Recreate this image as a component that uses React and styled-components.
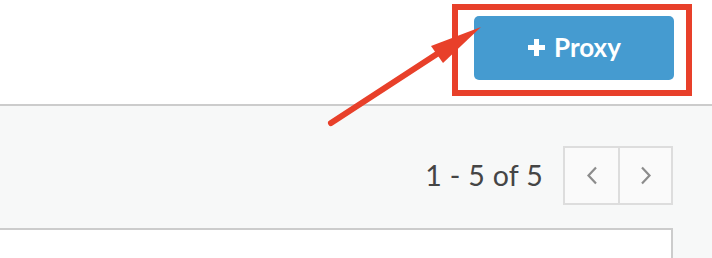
import React from 'react';
import styled, { createGlobalStyle } from 'styled-components';

const GlobalStyle = createGlobalStyle`
  html, body {
    margin: 0;
    padding: 0;
    background: #ffffff;
    font-family: Lato, "Open Sans", sans-serif;
    overflow: hidden;
  }
`;

const Page = styled.div`
  position: relative;
  width: 712px;
  height: 258px;
  overflow: hidden;
`;

const Header = styled.header`
  height: 106px;
  display: flex;
  justify-content: flex-end;
  align-items: flex-start;
  padding: 16px 38px 0 0;
  box-sizing: border-box;
  border-bottom: 2px solid #cccccc;
`;

const AddButton = styled.button`
  width: 200px;
  height: 64px;
  border: none;
  border-radius: 5px;
  background: #459bd0;
  color: #ffffff;
  font-family: Lato, sans-serif;
  font-weight: 700;
  font-size: 26px;
  display: flex;
  align-items: center;
  justify-content: center;
  gap: 8px;
  padding: 0 0 2px 0;
  cursor: pointer;
`;

const Toolbar = styled.div`
  background: #f7f8f8;
  height: 122px;
  display: flex;
  justify-content: flex-end;
  align-items: flex-start;
  padding: 40px 39px 0 0;
  box-sizing: border-box;
`;

const Pager = styled.div`
  display: flex;
  align-items: center;
  gap: 20px;
`;

const Count = styled.span`
  font-size: 28.5px;
  color: #454545;
  letter-spacing: 0.3px;
  margin-bottom: 2px;
`;

const PagerButtons = styled.div`
  display: flex;
  border: 2px solid #dddddd;
  background: #fafafa;
`;

const PagerButton = styled.button`
  width: 53px;
  height: 55px;
  border: none;
  background: transparent;
  padding: 0;
  display: flex;
  align-items: center;
  justify-content: center;
  border-left: ${p => (p.divider ? '2px solid #dddddd' : 'none')};
`;

const ContentArea = styled.div`
  background: #f7f8f8;
  height: 30px;
  padding-right: 39px;
`;

const Panel = styled.div`
  height: 100%;
  background: #ffffff;
  border-top: 2px solid #cccccc;
  border-right: 2px solid #cccccc;
`;

const Annotation = styled.svg`
  position: absolute;
  left: 0;
  top: 0;
  pointer-events: none;
`;

const Chevron = ({ dir }) => (
  <svg width="12" height="19" viewBox="0 0 12 19">
    <path
      d={dir === 'left' ? 'M10 1.5 L2.5 9.5 L10 17.5' : 'M2 1.5 L9.5 9.5 L2 17.5'}
      fill="none"
      stroke="#8c8c8c"
      strokeWidth="2.2"
    />
  </svg>
);

const PlusIcon = () => (
  <svg width="19" height="19" viewBox="0 0 19 19">
    <path d="M9.5 1 V18 M1 9.5 H18" stroke="#ffffff" strokeWidth="5" />
  </svg>
);

export default function App() {
  return (
    <Page>
      <GlobalStyle />
      <Header>
        <AddButton>
          <PlusIcon />
          Proxy
        </AddButton>
      </Header>
      <Toolbar>
        <Pager>
          <Count>1 - 5 of 5</Count>
          <PagerButtons>
            <PagerButton aria-label="Previous page">
              <Chevron dir="left" />
            </PagerButton>
            <PagerButton divider aria-label="Next page">
              <Chevron dir="right" />
            </PagerButton>
          </PagerButtons>
        </Pager>
      </Toolbar>
      <ContentArea>
        <Panel />
      </ContentArea>
      <Annotation width="712" height="258" viewBox="0 0 712 258">
        <rect x="455" y="7" width="234" height="86" fill="none" stroke="#e8402a" strokeWidth="6" />
        <line x1="331" y1="123" x2="440" y2="52" stroke="#e8402a" strokeWidth="6" strokeLinecap="round" />
        <polygon points="481,27 431,46 443,63" fill="#e8402a" />
      </Annotation>
    </Page>
  );
}
